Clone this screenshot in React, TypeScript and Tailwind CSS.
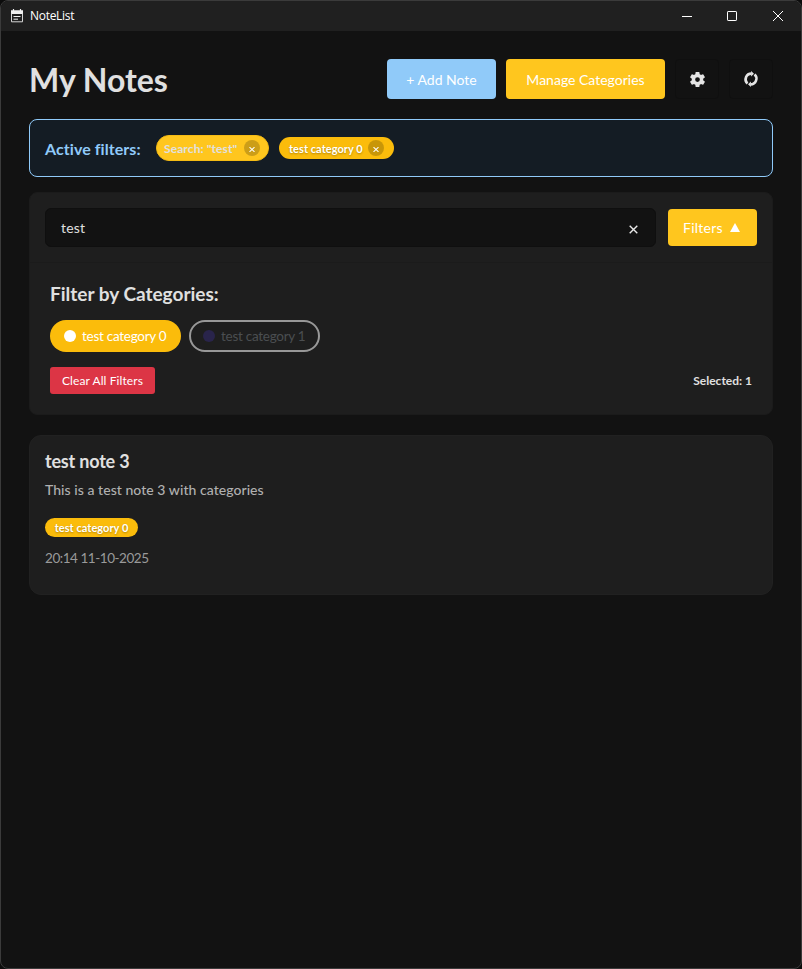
import React from "react";

function NoteIcon() {
  return (
    <svg className="h-[14px] w-[12px] shrink-0" viewBox="0 0 12 14" fill="none">
      <path d="M2.5 0v2M9.5 0v2" stroke="#f0f0f0" strokeWidth="1.2" />
      <path d="M0 1.2h12V5H0z" fill="#f0f0f0" />
      <path d="M.5 4.5v8.3h11V4.5" stroke="#d6d6d6" />
      <path d="M2.5 7.5h7M2.5 10.2h4.5" stroke="#f0f0f0" />
    </svg>
  );
}

function TitleBar() {
  return (
    <div className="flex h-[30px] items-center bg-[#202020] pl-[10px] font-['Open_Sans','Noto_Sans',sans-serif]">
      <NoteIcon />
      <span className="ml-[7px] text-[12px] leading-4 tracking-[-0.3px] text-white">NoteList</span>
      <div className="ml-auto flex">
        <div className="flex h-[30px] w-[45px] items-center justify-center">
          <svg width="10" height="10" viewBox="0 0 10 10" stroke="#fff">
            <path d="M0 5.5h10" />
          </svg>
        </div>
        <div className="flex h-[30px] w-[46px] items-center justify-center">
          <svg width="10" height="10" viewBox="0 0 10 10" fill="none" stroke="#fff">
            <rect x=".5" y=".5" width="9" height="9" rx=".6" />
          </svg>
        </div>
        <div className="flex h-[30px] w-[46px] items-center justify-center">
          <svg width="10" height="10" viewBox="0 0 10 10" stroke="#fff">
            <path d="M0 0l10 10M10 0L0 10" />
          </svg>
        </div>
      </div>
    </div>
  );
}

function GearIcon() {
  return (
    <svg width="19" height="19" viewBox="0 0 24 24" fill="#e4e4e4">
      <path d="M19.14 12.94c.04-.3.06-.61.06-.94 0-.32-.02-.64-.07-.94l2.03-1.58a.49.49 0 0 0 .12-.61l-1.92-3.32a.488.488 0 0 0-.59-.22l-2.39.96c-.5-.38-1.03-.7-1.62-.94l-.36-2.54a.484.484 0 0 0-.48-.41h-3.84c-.24 0-.43.17-.47.41l-.36 2.54c-.59.24-1.13.57-1.62.94l-2.39-.96c-.22-.08-.47 0-.59.22L2.74 8.87c-.12.21-.08.47.12.61l2.03 1.58c-.05.3-.09.63-.09.94s.02.64.07.94l-2.03 1.58a.49.49 0 0 0-.12.61l1.92 3.32c.12.22.37.29.59.22l2.39-.96c.5.38 1.03.7 1.62.94l.36 2.54c.05.24.24.41.48.41h3.84c.24 0 .44-.17.47-.41l.36-2.54c.59-.24 1.13-.56 1.62-.94l2.39.96c.22.08.47 0 .59-.22l1.92-3.32c.12-.22.07-.47-.12-.61l-2.01-1.58zM12 15a3 3 0 1 1 0-6 3 3 0 0 1 0 6z" />
    </svg>
  );
}

function SyncIcon() {
  return (
    <svg width="16" height="16" viewBox="0 0 16 16" fill="none" stroke="#e4e4e4" strokeWidth="2.6">
      <path d="M4.4 12.6A5.8 5.8 0 0 1 8.4 2.6" />
      <path d="M11.6 3.4A5.8 5.8 0 0 1 7.6 13.4" />
      <path d="M8.1 0v5.6L11 2.8zM7.9 16v-5.6L5 13.2z" fill="#e4e4e4" stroke="none" />
    </svg>
  );
}

function Header() {
  return (
    <header className="flex h-10 items-center">
      <h1 className="mt-[2px] text-[32px] leading-10 font-bold whitespace-nowrap">My Notes</h1>
      <div className="ml-auto flex">
        <button className="h-10 w-[109px] rounded bg-[#90caf9] text-[14px] whitespace-nowrap text-white">
          + Add Note
        </button>
        <button className="ml-[10px] h-10 w-[159px] rounded bg-[#ffc61e] text-[14px] whitespace-nowrap text-white">
          Manage Categories
        </button>
        <button className="ml-[10px] flex h-10 w-[44px] items-center justify-center rounded border border-[#0f0f0f]">
          <GearIcon />
        </button>
        <button className="ml-[10px] flex h-10 w-[44px] items-center justify-center rounded border border-[#0f0f0f]">
          <SyncIcon />
        </button>
      </div>
    </header>
  );
}

function RemoveDot() {
  return (
    <span className="flex h-4 w-4 shrink-0 items-center justify-center rounded-full bg-black/20">
      <svg className="mt-[2px]" width="6" height="5" viewBox="0 0 6 5" stroke="#fff" strokeWidth="1.1">
        <path d="M.5.2l5 4.6M5.5.2l-5 4.6" />
      </svg>
    </span>
  );
}

function ActiveFilters() {
  return (
    <section className="mt-5 flex h-[58px] items-center rounded-lg border border-[#90caf9] bg-[#141c24] pl-[15px]">
      <span className="mt-[2px] w-[111px] text-[16px] font-bold tracking-[0.07px] whitespace-nowrap text-[#90caf9]">
        Active filters:
      </span>
      <span className="flex h-[26px] w-[113px] items-center justify-between rounded-full border border-[#f5bb14] bg-[#ffc61e] pr-2 pl-[7px] text-[12px] font-bold whitespace-nowrap text-[#e0e0e0]">
        <span className="mt-[2px] tracking-[0.1px]">Search: "test"</span>
        <RemoveDot />
      </span>
      <span className="ml-[10px] flex h-[22px] w-[115px] items-center justify-between rounded-full bg-[#fbbc0b] pr-[10px] pl-[10px] text-[11px] font-bold whitespace-nowrap text-white">
        <span className="mt-[2px] tracking-[0.05px] [text-shadow:0_1px_2px_rgba(0,0,0,0.3)]">test category 0</span>
        <RemoveDot />
      </span>
    </section>
  );
}

function FilterPanel() {
  return (
    <section className="mt-[15px] h-[223px] rounded-lg border border-[#1b1b1b] bg-[#1e1e1e]">
      <div className="flex h-[70px] items-center border-b border-[#1b1b1b] px-[15px]">
        <div className="flex h-[39px] w-[611px] items-center rounded-md border border-[#0f0f0f] bg-[#121212] pr-[17px] pl-[15px]">
          <span className="text-[14px] tracking-[0.2px]">test</span>
          <svg className="mt-1 ml-auto" width="9" height="9" viewBox="0 0 9 9" stroke="#e8e8e8" strokeWidth="1.4">
            <path d="M.7.7l7.6 7.6M8.3.7L.7 8.3" />
          </svg>
        </div>
        <button className="ml-3 flex h-[37px] w-[89px] items-center rounded bg-[#ffc61e] pl-[15px] text-[14px] text-white">
          <span className="w-[47px] text-left tracking-[0.25px]">Filters</span>
          <svg width="10" height="9" viewBox="0 0 10 9" fill="#fff">
            <path d="M5 0l5 9H0z" />
          </svg>
        </button>
      </div>
      <div className="px-5 pt-[17px]">
        <h2 className="text-[19px] leading-7 font-bold whitespace-nowrap">Filter by Categories:</h2>
        <div className="mt-3 flex gap-2 text-[13.5px] tracking-[-0.27px] whitespace-nowrap">
          <span className="flex h-8 w-[131px] items-center rounded-full bg-[#fbbc0b] pl-[14px] text-white">
            <span className="mr-[6px] h-3 w-3 rounded-full bg-white" />
            <span className="mt-px">test category 0</span>
          </span>
          <span className="flex h-8 w-[131px] items-center rounded-full border-2 border-[#989898] pl-3 text-[#4b4e51]">
            <span className="mr-[6px] h-3 w-3 rounded-full bg-[#29244b]" />
            <span className="mt-px">test category 1</span>
          </span>
        </div>
        <div className="mt-[15px] flex items-center justify-between text-[12px] whitespace-nowrap">
          <button className="h-[27px] w-[105px] rounded-[3px] bg-[#dc3545] tracking-[0.1px] text-white">
            Clear All Filters
          </button>
          <span className="font-bold">Selected: 1</span>
        </div>
      </div>
    </section>
  );
}

function NoteCard() {
  return (
    <article className="mt-5 h-[160px] rounded-xl border border-[#212121] bg-[#1e1e1e] px-[15px] pt-[13px] whitespace-nowrap">
      <h3 className="text-[18px] leading-6 font-bold tracking-[-0.2px]">test note 3</h3>
      <p className="mt-[7px] text-[14px] leading-5 font-medium tracking-[0.05px] text-[#b0b0b0]">
        This is a test note 3 with categories
      </p>
      <div className="mt-[18px] flex h-[19px] w-[93px] items-center justify-center rounded-full bg-[#fbbc0b] text-[11px] font-bold tracking-[0.05px] text-white [text-shadow:0_1px_2px_rgba(0,0,0,0.3)]">
        <span className="mt-px">test category 0</span>
      </div>
      <time className="mt-[11px] block text-[13.5px] leading-5 tracking-[-0.45px] text-[#9a9a9a]">20:14 11-10-2025</time>
    </article>
  );
}

export default function App() {
  return (
    <div className="h-[969px] w-[802px] bg-[#0c0c0c]">
      <div className="h-full w-full overflow-hidden rounded-lg border border-[#3b3b3b] bg-[#121212] font-[Lato,sans-serif] text-[#e0e0e0]">
        <TitleBar />
        <main className="px-7 pt-7">
          <Header />
          <ActiveFilters />
          <FilterPanel />
          <NoteCard />
        </main>
      </div>
    </div>
  );
}
